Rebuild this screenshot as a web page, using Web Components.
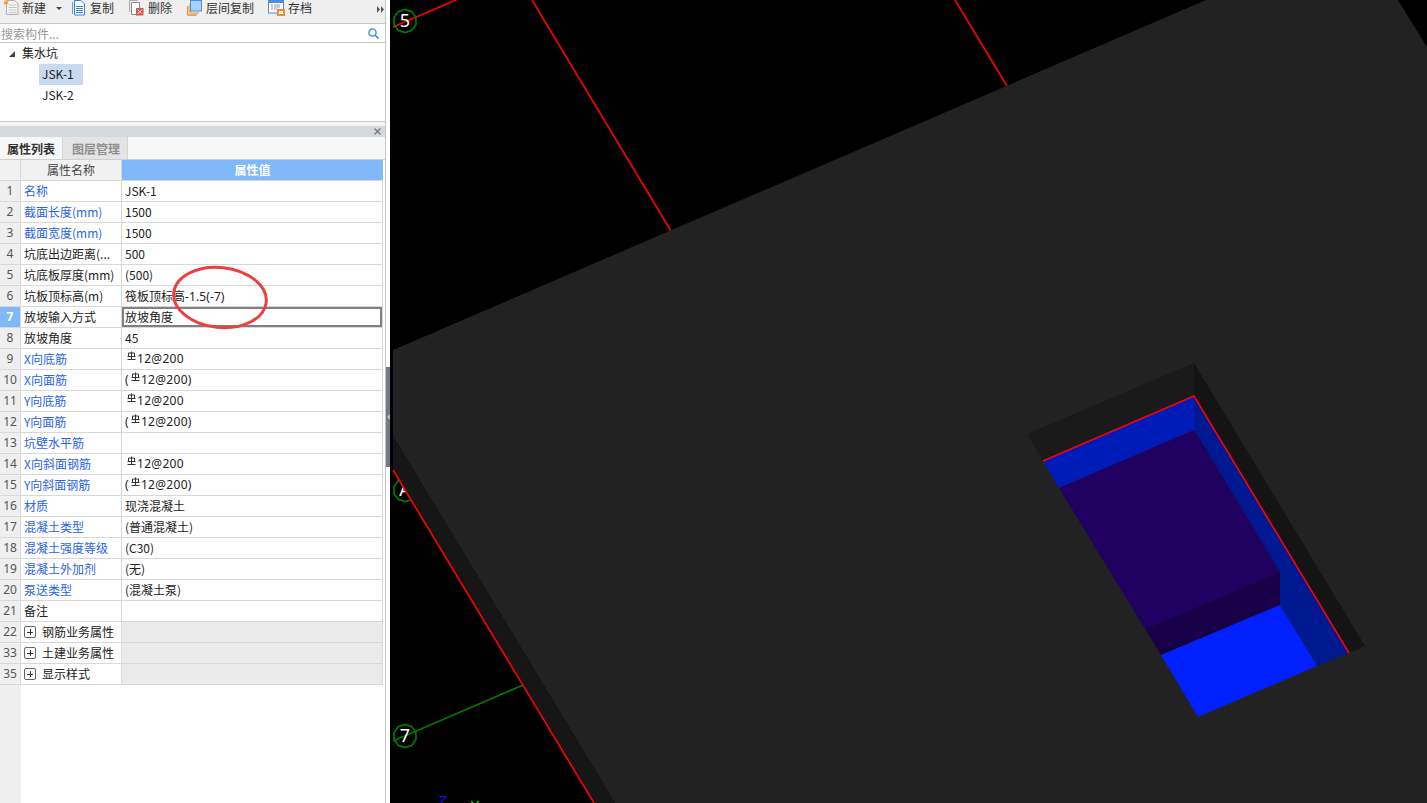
<!DOCTYPE html>
<html lang="zh">
<head>
<meta charset="utf-8">
<title>集水坑</title>
<style>
  html, body { margin: 0; height: 100%; overflow: hidden; background: #fff; }
  body { font: 12px "Noto Sans CJK SC", "Noto Sans", sans-serif; color: #222; }
  .bar { display: inline-block; vertical-align: 1px; line-height: 18px; }
  .bar b { font: 12px "Noto Sans", sans-serif; letter-spacing: .3px; }
  .lat { font-family: "Noto Sans", sans-serif; letter-spacing: .1px; }
</style>
</head>
<body>

<app-shell>
  <side-panel slot="side">
    <tool-bar slot="toolbar">
      <tool-button width="69" caret>
        <svg slot="icon" width="16" height="16" viewBox="0 0 16 16"><path d="M3.500.5h8l3.500 3.500v10.500h-11.500z" fill="#f6f6f6" stroke="#b0b0b0"/><path d="M5.500 5h8M5.500 7.500h8M5.500 10h8M5.500 12.500h8" stroke="#c4c4c4"/><path d="M3 0l1 1.500 1.800-.3-1 1.500 1 1.500-1.800-.3-1 1.500-1-1.500-1.800.3 1-1.500-1-1.500 1.800.3z" fill="#f59a3c"/></svg>
        新建
      </tool-button>
      <tool-button width="57">
        <svg slot="icon" width="15" height="16" viewBox="0 0 15 16"><path d="M.5 2v12" stroke="#5a9fe0" fill="none"/><path d="M2.500.5h6.500l3.500 3.500v11h-10z" fill="#fff" stroke="#2f82d6"/><path d="M4 6.500h7M4 8.500h7M4 10.500h7M4 12.500h7" stroke="#2f82d6"/></svg>
        复制
      </tool-button>
      <tool-button width="58">
        <svg slot="icon" width="16" height="16" viewBox="0 0 16 16"><path d="M.5 12V.5h8" fill="none" stroke="#a8a8a8"/><path d="M2.500 2.500h8v12h-8z" fill="#fff" stroke="#8a8a8a"/><rect x="7" y="8" width="7.500" height="7.500" fill="#d9534f"/><path d="M8.700 9.700l4 4m0-4l-4 4" stroke="#fff"/></svg>
        删除
      </tool-button>
      <tool-button width="81">
        <svg slot="icon" width="16" height="16" viewBox="0 0 16 16"><path d="M.7 15V6M.7 15h9" stroke="#f08a30" stroke-width="1.400" fill="none"/><path d="M3 13V4M3 13h9" stroke="#f08a30" stroke-width="1.200" fill="none"/><rect x="3.500" y=".5" width="11" height="10.500" fill="#a9d0f8" stroke="#4a90e2"/></svg>
        层间复制
      </tool-button>
      <tool-button>
        <svg slot="icon" width="17" height="16" viewBox="0 0 17 16"><rect x=".5" y=".5" width="15" height="12.500" fill="#fff" stroke="#4a90d9"/><rect x="0" y="0" width="16" height="3" fill="#4a90d9"/><path d="M3 5h2M3 7h2M3 9h2M6 5h6M6 7h6M6 9h3" stroke="#9a9a9a"/><rect x="9" y="9" width="8" height="7" fill="#f08a30"/><rect x="11" y="11" width="4" height="3" fill="#fff"/></svg>
        存档
      </tool-button>
    </tool-bar>
    <search-box slot="search" placeholder="搜索构件..."></search-box>
    <tree-view slot="tree">
      <tree-node root>集水坑</tree-node>
      <tree-node selected>JSK-1</tree-node>
      <tree-node>JSK-2</tree-node>
    </tree-view>
    <dock-title slot="title"></dock-title>
    <tab-strip slot="tabs">
      <tab-item active>属性列表</tab-item>
      <tab-item>图层管理</tab-item>
    </tab-strip>
    <prop-grid slot="grid">
      <prop-row n="1" link><span slot="name">名称</span>JSK-1</prop-row>
      <prop-row n="2" link><span slot="name">截面长度(mm)</span>1500</prop-row>
      <prop-row n="3" link><span slot="name">截面宽度(mm)</span>1500</prop-row>
      <prop-row n="4"><span slot="name">坑底出边距离(...</span>500</prop-row>
      <prop-row n="5"><span slot="name">坑底板厚度(mm)</span>(500)</prop-row>
      <prop-row n="6"><span slot="name">坑板顶标高(m)</span>筏板顶标高<span class="lat">-1.5(-7)</span></prop-row>
      <prop-row n="7" selected><span slot="name">放坡输入方式</span>放坡角度</prop-row>
      <prop-row n="8"><span slot="name">放坡角度</span>45</prop-row>
      <prop-row n="9" link><span slot="name">X向底筋</span><span class="bar"><rebar-mark></rebar-mark><b>12@200</b></span></prop-row>
      <prop-row n="10" link><span slot="name">X向面筋</span><span class="bar"><b>(</b><rebar-mark></rebar-mark><b>12@200)</b></span></prop-row>
      <prop-row n="11" link><span slot="name">Y向底筋</span><span class="bar"><rebar-mark></rebar-mark><b>12@200</b></span></prop-row>
      <prop-row n="12" link><span slot="name">Y向面筋</span><span class="bar"><b>(</b><rebar-mark></rebar-mark><b>12@200)</b></span></prop-row>
      <prop-row n="13" link><span slot="name">坑壁水平筋</span></prop-row>
      <prop-row n="14" link><span slot="name">X向斜面钢筋</span><span class="bar"><rebar-mark></rebar-mark><b>12@200</b></span></prop-row>
      <prop-row n="15" link><span slot="name">Y向斜面钢筋</span><span class="bar"><b>(</b><rebar-mark></rebar-mark><b>12@200)</b></span></prop-row>
      <prop-row n="16" link><span slot="name">材质</span>现浇混凝土</prop-row>
      <prop-row n="17" link><span slot="name">混凝土类型</span>(普通混凝土)</prop-row>
      <prop-row n="18" link><span slot="name">混凝土强度等级</span>(C30)</prop-row>
      <prop-row n="19" link><span slot="name">混凝土外加剂</span>(无)</prop-row>
      <prop-row n="20" link><span slot="name">泵送类型</span>(混凝土泵)</prop-row>
      <prop-row n="21"><span slot="name">备注</span></prop-row>
      <prop-row n="22" group><span slot="name">钢筋业务属性</span></prop-row>
      <prop-row n="33" group><span slot="name">土建业务属性</span></prop-row>
      <prop-row n="35" group><span slot="name">显示样式</span></prop-row>
    </prop-grid>
  </side-panel>
  <split-bar slot="split"></split-bar>
  <model-view slot="view"></model-view>
</app-shell>

<script>
class AppShell extends HTMLElement {
  constructor() {
    super();
    this.attachShadow({ mode: "open" });
    this.shadowRoot.innerHTML = /*html*/`
      <style>
        :host { display: flex; height: 803px; width: 1427px; overflow: hidden; }
        ::slotted([slot=view]) { flex: 1; }
      </style>
      <slot name="side"></slot>
      <slot name="split"></slot>
      <slot name="view"></slot>
    `;
  }
}

class SidePanel extends HTMLElement {
  constructor() {
    super();
    this.attachShadow({ mode: "open" });
    this.shadowRoot.innerHTML = /*html*/`
      <style>
        :host {
          display: flex;
          flex-direction: column;
          position: relative;
          flex: none;
          width: 385px;
          height: 803px;
          border-right: 1px solid #c4c4c4;
          background: #fff;
        }
        #gap { height: 4px; background: #f4f4f4; flex: none; }
        #mark { position: absolute; left: 171px; top: 264px; pointer-events: none; }
      </style>
      <slot name="toolbar"></slot>
      <slot name="search"></slot>
      <slot name="tree"></slot>
      <div id="gap"></div>
      <slot name="title"></slot>
      <slot name="tabs"></slot>
      <slot name="grid"></slot>
      <svg id="mark" width="98" height="67" viewBox="0 0 98 67">
        <ellipse cx="49" cy="33.500" rx="46.500" ry="30" transform="rotate(6 49 33.500)" fill="none" stroke="#ee3f3f" stroke-width="3"/>
      </svg>
    `;
  }
}

class ToolBar extends HTMLElement {
  constructor() {
    super();
    this.attachShadow({ mode: "open" });
    this.shadowRoot.innerHTML = /*html*/`
      <style>
        :host {
          display: flex;
          align-items: flex-start;
          flex: none;
          height: 23px;
          padding-left: 3px;
          background: #efefef;
          border-bottom: 1px solid #c6c6c6;
        }
        #more { margin: 6px 1px 0 auto; }
      </style>
      <slot></slot>
      <svg id="more" width="7" height="7" viewBox="0 0 7 7"><path d="M0 0l3 3.500-3 3.500zM4 0l3 3.500-3 3.500z" fill="#555"/></svg>
    `;
  }
}

class ToolButton extends HTMLElement {
  constructor() {
    super();
    this.attachShadow({ mode: "open" });
    this.shadowRoot.innerHTML = /*html*/`
      <style>
        :host {
          display: flex;
          align-items: center;
          gap: 3px;
          height: 16px;
          color: #333;
          font-size: 12px;
          line-height: 16px;
          white-space: nowrap;
        }
        #caret { display: none; margin-left: 7px; width: 0; height: 0;
          border-left: 3px solid transparent; border-right: 3px solid transparent; border-top: 3px solid #444; }
        :host([caret]) #caret { display: block; }
        ::slotted(svg) { flex: none; }
      </style>
      <slot name="icon"></slot>
      <slot></slot>
      <span id="caret"></span>
    `;
  }

  connectedCallback() {
    if (this.hasAttribute('width')) {
      this.style.width = this.getAttribute('width') + 'px';
    }
  }
}

class SearchBox extends HTMLElement {
  constructor() {
    super();
    this.attachShadow({ mode: "open" });
    this.shadowRoot.innerHTML = /*html*/`
      <style>
        :host {
          display: flex;
          align-items: center;
          justify-content: space-between;
          flex: none;
          height: 18px;
          padding: 0 6px 0 1px;
          border-bottom: 1px solid #c6c6c6;
          color: #999;
          font-size: 12px;
        }
      </style>
      <span id="text"></span>
      <svg width="11" height="11" viewBox="0 0 11 11"><circle cx="4.500" cy="4.500" r="3.600" fill="none" stroke="#2f8ec9" stroke-width="1.300"/><path d="M7.200 7.200l3.300 3.300" stroke="#2f8ec9" stroke-width="1.600"/></svg>
    `;
  }

  connectedCallback() {
    this.shadowRoot.querySelector('#text').textContent = this.getAttribute('placeholder');
  }
}

class TreeView extends HTMLElement {
  constructor() {
    super();
    this.attachShadow({ mode: "open" });
    this.shadowRoot.innerHTML = /*html*/`
      <style>
        :host {
          display: flex;
          flex-direction: column;
          flex: none;
          height: 78px;
          border-bottom: 1px solid #c6c6c6;
        }
      </style>
      <slot></slot>
    `;
  }
}

class TreeNode extends HTMLElement {
  constructor() {
    super();
    this.attachShadow({ mode: "open" });
    this.shadowRoot.innerHTML = /*html*/`
      <style>
        :host {
          display: flex;
          align-items: center;
          height: 21px;
          padding-left: 39px;
          color: #222;
          font-size: 12px;
        }
        :host([root]) { padding-left: 9px; }
        #arrow { display: none; width: 0; height: 0; margin-right: 7px;
          border-left: 6px solid transparent; border-bottom: 6px solid #444; }
        :host([root]) #arrow { display: block; }
        #label { padding: 0 9px 0 3px; height: 21px; line-height: 19px; }
        :host([root]) #label { padding: 0; }
        :host([selected]) #label { background: #c9d9ef; }
      </style>
      <span id="arrow"></span>
      <span id="label"><slot></slot></span>
    `;
  }
}

class DockTitle extends HTMLElement {
  constructor() {
    super();
    this.attachShadow({ mode: "open" });
    this.shadowRoot.innerHTML = /*html*/`
      <style>
        :host {
          display: flex;
          align-items: center;
          justify-content: flex-end;
          flex: none;
          height: 11px;
          padding-right: 4px;
          background: #d5d8dd;
        }
      </style>
      <svg width="7" height="7" viewBox="0 0 7 7"><path d="M.5.5l6 6m0-6l-6 6" stroke="#777" stroke-width="1.300"/></svg>
    `;
  }
}

class TabStrip extends HTMLElement {
  constructor() {
    super();
    this.attachShadow({ mode: "open" });
    this.shadowRoot.innerHTML = /*html*/`
      <style>
        :host {
          display: flex;
          flex: none;
          height: 22px;
          background: #f7f7f7;
          border-bottom: 1px solid #cfcfcf;
        }
      </style>
      <slot></slot>
    `;
  }
}

class TabItem extends HTMLElement {
  constructor() {
    super();
    this.attachShadow({ mode: "open" });
    this.shadowRoot.innerHTML = /*html*/`
      <style>
        :host {
          display: block;
          padding: 0 7px 0 9px;
          width: 48px;
          line-height: 23px;
          font-size: 12px;
          font-weight: 700;
          color: #8e8e8e;
          background: #e4e4e4;
          border-right: 1px solid #d4d4d4;
          white-space: nowrap;
        }
        :host([active]) { color: #333; background: #f7f7f7; padding: 0 7px; }
      </style>
      <slot></slot>
    `;
  }
}

class PropGrid extends HTMLElement {
  constructor() {
    super();
    this.attachShadow({ mode: "open" });
    this.shadowRoot.innerHTML = /*html*/`
      <style>
        :host {
          display: block;
          flex: 1;
          width: 383px;
          background: linear-gradient(to right, #efefef 21px, #fff 21px);
        }
        #head {
          display: grid;
          grid-template-columns: 21px 101px 261px;
          height: 21px;
          line-height: 20px;
          text-align: center;
          font-size: 12px;
        }
        #head div { background: #f1f1f1; border-right: 1px solid #d8d8d8; border-bottom: 1px solid #d8d8d8; color: #444; }
        #head #val { background: #80b8fa; color: #fff; font-weight: 700; border-right: 0; }
      </style>
      <div id="head">
        <div></div>
        <div>属性名称</div>
        <div id="val">属性值</div>
      </div>
      <slot></slot>
    `;
  }
}

class PropRow extends HTMLElement {
  constructor() {
    super();
    this.attachShadow({ mode: "open" });
    this.shadowRoot.innerHTML = /*html*/`
      <style>
        :host {
          display: grid;
          grid-template-columns: 21px 101px 261px;
          height: 21px;
          font-size: 12px;
          line-height: 20px;
          white-space: nowrap;
        }
        div { border-bottom: 1px solid #d8d8d8; border-right: 1px solid #d8d8d8; box-sizing: border-box; overflow: hidden; }
        #num { background: #efefef; color: #555; text-align: center; font-family: "Noto Sans", sans-serif; }
        #name { background: #fff; padding-left: 3px; color: #222; display: flex; align-items: center; }
        #val { background: #fff; padding-left: 3px; color: #222; }
        :host([link]) #name { color: #2a63e6; }
        :host([selected]) #num { background: #80b8fa; color: #fff; font-weight: 700; }
        :host([selected]) #val { box-shadow: inset 0 0 0 2px #808080; }
        :host([group]) #val { background: #ebebeb; }
        #plus { display: none; flex: none; width: 10px; height: 10px; margin-right: 6px; border: 1px solid #666; border-radius: 2px; background:
          linear-gradient(#333, #333) center / 6px 1px no-repeat,
          linear-gradient(#333, #333) center / 1px 6px no-repeat, #fff; }
        :host([group]) #plus { display: block; }
      </style>
      <div id="num"></div>
      <div id="name"><span id="plus"></span><slot name="name"></slot></div>
      <div id="val"><slot></slot></div>
    `;
  }

  connectedCallback() {
    this.shadowRoot.querySelector('#num').textContent = this.getAttribute('n');
  }
}

class RebarMark extends HTMLElement {
  constructor() {
    super();
    this.attachShadow({ mode: "open" });
    this.shadowRoot.innerHTML = /*html*/`
      <style>
        :host { display: inline-block; width: 9px; height: 9px; margin: 0 1px 0 2px; vertical-align: 3px; }
        svg { display: block; }
      </style>
      <svg width="9" height="9" viewBox="0 0 9 9"><path d="M1.500 5.500V2h6v3.500M.5 5.500h8M4.500.5v8M.5 8.500h8" fill="none" stroke="#333" stroke-width="1"/></svg>
    `;
  }
}

class SplitBar extends HTMLElement {
  constructor() {
    super();
    this.attachShadow({ mode: "open" });
    this.shadowRoot.innerHTML = /*html*/`
      <style>
        :host { display: block; flex: none; width: 4px; height: 803px; background: #fff; padding-top: 367px; box-sizing: border-box; }
        #handle { display: flex; align-items: center; justify-content: center; height: 100px; background: #6e7b8b; }
        #handle span { width: 0; height: 0; border-top: 3px solid transparent; border-bottom: 3px solid transparent; border-right: 3px solid #b8bec6; }
      </style>
      <div id="handle"><span></span></div>
    `;
  }
}

class ModelView extends HTMLElement {
  constructor() {
    super();
    this.attachShadow({ mode: "open" });
    const bubble = (cx, cy, label) => {
      const pts = [];
      for (let i = 0; i < 10; i++) {
        const a = Math.PI * 2 * i / 10 + 0.3;
        pts.push((cx + 11.5 * Math.cos(a)).toFixed(1) + ',' + (cy + 11.5 * Math.sin(a)).toFixed(1));
      }
      return `<polygon points="${pts.join(' ')}" fill="none" stroke="#007a00" stroke-width="1.700"/>
        <text x="${cx}" y="${cy + 6}" text-anchor="middle" fill="#fff" font-size="18">${label}</text>`;
    };
    this.shadowRoot.innerHTML = /*html*/`
      <style>
        :host { display: block; height: 803px; background: #000; overflow: hidden; }
        svg { display: block; }
        text { font-family: "Noto Sans", sans-serif; }
      </style>
      <svg width="1037" height="803" viewBox="390 0 1037 803">
        <rect x="390" y="0" width="1037" height="803" fill="#000"/>
        <path d="M393 27L456 0M532 0L671 231M955 0L1007 86" stroke="#f00" stroke-width="1.600" fill="none"/>
        <path d="M393 741L523 685" stroke="#007a00" stroke-width="1.700" fill="none"/>
        ${bubble(405, 21, '5')}
        ${bubble(405, 490, 'A')}
        ${bubble(405, 736, '7')}
        <polygon points="393,436 393,470 594,803 615,803" fill="#161616"/>
        <polygon points="393,350 1206,0 1398,0 1427,47 1427,803 615,803 393,436" fill="#222"/>
        <path d="M393 470L594 803" stroke="#f00" stroke-width="1.600" fill="none"/>

        <polygon points="1027,434 1194,363 1194,396 1043,461" fill="#1a1a1a"/>
        <polygon points="1194,363 1365,646 1349,653 1194,396" fill="#141414"/>
        <polygon points="1043,461 1194,396 1194,430 1059,488" fill="#001cb8"/>
        <polygon points="1194,396 1349,653 1317,666 1280,605 1280,572 1194,430" fill="#001890"/>
        <polygon points="1059,488 1194,430 1280,572 1145,629" fill="#200060"/>
        <polygon points="1145,629 1280,572 1280,605 1161,655" fill="#180048"/>
        <polygon points="1161,655 1280,605 1317,666 1198,717" fill="#0020ff"/>
        <path d="M1043 461L1194 396L1349 653" stroke="#f00" stroke-width="1.600" fill="none"/>

        <text x="443" y="806" text-anchor="middle" fill="#1010ff" font-size="15">Z</text>
        <text x="475" y="811" text-anchor="middle" fill="#20e020" font-size="15">Y</text>
      </svg>
    `;
  }
}

customElements.define('app-shell', AppShell);
customElements.define('side-panel', SidePanel);
customElements.define('tool-bar', ToolBar);
customElements.define('tool-button', ToolButton);
customElements.define('search-box', SearchBox);
customElements.define('tree-view', TreeView);
customElements.define('tree-node', TreeNode);
customElements.define('dock-title', DockTitle);
customElements.define('tab-strip', TabStrip);
customElements.define('tab-item', TabItem);
customElements.define('prop-grid', PropGrid);
customElements.define('prop-row', PropRow);
customElements.define('rebar-mark', RebarMark);
customElements.define('split-bar', SplitBar);
customElements.define('model-view', ModelView);
</script>
</body>
</html>
